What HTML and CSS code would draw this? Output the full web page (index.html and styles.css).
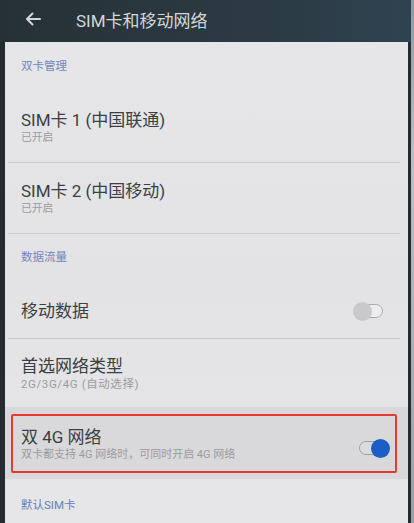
FILE: index.html
```html
<!DOCTYPE html>
<html lang="zh-CN">
<head>
<meta charset="utf-8">
<title>SIM卡和移动网络</title>
<link rel="stylesheet" href="styles.css">
</head>
<body>
<div class="device">
  <div class="screen">
    <header class="appbar">
      <svg class="back" width="16" height="14" viewBox="0 0 16 14" aria-hidden="true">
        <path d="M15 7H2M7.5 1.5L2 7l5.5 5.5" fill="none" stroke="#d3d7da" stroke-width="2" stroke-linecap="round" stroke-linejoin="round"/>
      </svg>
      <h1 class="title">SIM卡和移动网络</h1>
    </header>
    <main class="panel">
      <div class="section section-first">双卡管理</div>
      <div class="row row-two">
        <div class="row-title">SIM卡 1 (中国联通)</div>
        <div class="row-sub">已开启</div>
      </div>
      <div class="divider"></div>
      <div class="row row-two">
        <div class="row-title">SIM卡 2 (中国移动)</div>
        <div class="row-sub">已开启</div>
      </div>
      <div class="divider"></div>
      <div class="section section-data">数据流量</div>
      <div class="row row-switch">
        <div class="row-title">移动数据</div>
        <span class="toggle toggle-off"><span class="knob"></span></span>
      </div>
      <div class="divider"></div>
      <div class="row row-two row-pref">
        <div class="row-title">首选网络类型</div>
        <div class="row-sub sub-wide">2G/3G/4G (自动选择)</div>
      </div>
      <div class="highlight">
        <div class="redbox">
          <div class="redbox-text">
            <div class="row-title">双 4G 网络</div>
            <div class="row-sub">双卡都支持 4G 网络时，可同时开启 4G 网络</div>
          </div>
          <span class="toggle toggle-on"><span class="knob"></span></span>
        </div>
      </div>
      <div class="section section-last">默认SIM卡</div>
    </main>
  </div>
  <div class="bezel"></div>
</div>
</body>
</html>
```
FILE: styles.css
```css
* { box-sizing: border-box; }
html, body { margin: 0; padding: 0; }
body {
  width: 414px;
  height: 523px;
  overflow: hidden;
  background: #222c31;
  font-family: "Roboto", "Noto Sans CJK SC", "Noto Sans", sans-serif;
}
.device {
  display: flex;
  width: 414px;
  height: 523px;
}
.screen {
  flex: 1;
  display: flex;
  flex-direction: column;
  min-width: 0;
}
.bezel {
  width: 3px;
  background: linear-gradient(#8c9aa2, #b9bfc3 30%, #9aa1a6);
}
.appbar {
  height: 42px;
  display: flex;
  align-items: center;
  padding: 0 0 4px 25px;
  background: linear-gradient(90deg, #263136 0%, #2b3a43 60%, #2f4250 100%);
}
.back { display: block; flex: none; }
.title {
  margin: 0 0 0 35px;
  font-size: 17px;
  font-weight: 400;
  color: #d3d7da;
  letter-spacing: 0;
}
.panel {
  flex: 1;
  margin: 0 3px 0 5px;
  background: linear-gradient(180deg, #e6e6e8 0%, #e3e3e5 50%, #e6e5e8 100%);
  display: flex;
  flex-direction: column;
}
.section {
  padding-left: 16px;
  font-size: 11.5px;
  line-height: 17px;
  color: #7186bd;
}
.section-first { height: 50px; padding-top: 16px; }
.section-data { height: 50px; padding-top: 15px; }
.section-last { padding-top: 18px; color: #5f82c2; }
.row {
  padding: 0 25px 0 16px;
}
.row-two { height: 70px; padding-top: 18px; }
.row-pref { height: 68px; padding-top: 17px; }
.row-title {
  font-size: 17px;
  line-height: 20px;
  color: #3a3f43;
}
.row-sub {
  font-size: 10.8px;
  line-height: 16px;
  color: #9c9c9f;
}
.sub-wide {
  font-size: 11.5px;
  letter-spacing: 0.6px;
}
.row-switch {
  height: 54px;
  display: flex;
  align-items: center;
  justify-content: space-between;
}
.divider {
  height: 1px;
  margin: 0 8px 0 3px;
  background: #cbcbce;
}
.highlight {
  height: 72px;
  padding: 7px 11px 6px 6px;
  background: #d9d9db;
}
.redbox {
  height: 59px;
  border: 2px solid #e53b30;
  border-radius: 2px;
  display: flex;
  align-items: flex-start;
  justify-content: space-between;
  padding: 11px 8px 0 8px;
}
.redbox .row-sub { font-size: 11px; }
.toggle {
  position: relative;
  display: block;
  width: 28px;
  height: 14px;
  border-radius: 7px;
  border: 1.5px solid #a9a9ac;
  background: #ececee;
  flex: none;
}
.toggle .knob {
  position: absolute;
  top: 50%;
  width: 19px;
  height: 19px;
  margin-top: -9.5px;
  border-radius: 50%;
}
.toggle-off .knob {
  left: -3px;
  background: #c9c9cc;
}
.toggle-on {
  margin-top: 14px;
  background: #dcdcde;
  border-color: #9ea0a4;
}
.toggle-on .knob {
  left: 11px;
  background: #1b5fc5;
}
```
